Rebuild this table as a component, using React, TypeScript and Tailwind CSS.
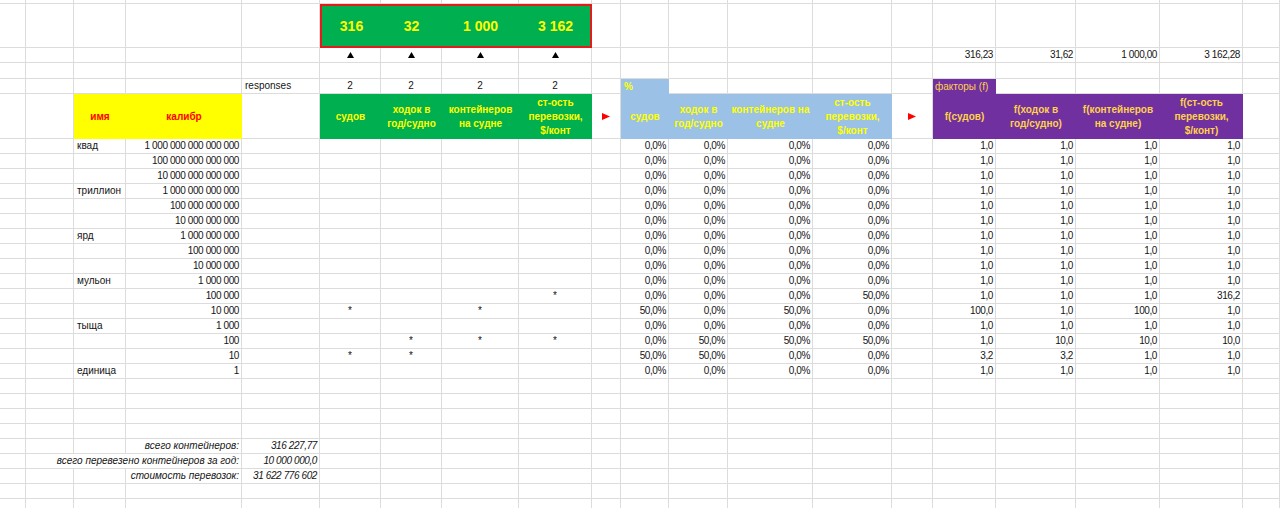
import React from "react";

type Cell = { t?: React.ReactNode; a?: "L" | "R" | "C"; k?: string; s?: 2 | 3 | 4; raw?: boolean };

const SPAN: Record<number, string> = { 2: "col-span-2", 3: "col-span-3", 4: "col-span-4" };

const base =
  "border-r border-b border-[#dcdcdc] flex items-center overflow-hidden whitespace-nowrap text-[10px] leading-none text-[#141414]";

const up = (
  <svg width="7" height="6" viewBox="0 0 7 6">
    <path d="M3.5 0L7 6H0z" fill="#000" />
  </svg>
);
const right = (
  <svg width="8" height="7" viewBox="0 0 8 7">
    <path d="M0 0L8 3.5L0 7z" fill="#ff0000" />
  </svg>
);

const E = (n: number): Cell[] => Array.from({ length: n }, () => ({}));

const names = ["квад", "", "", "триллион", "", "", "ярд", "", "", "мульон", "", "", "тыща", "", "", "единица"];
const cal = [
  "1 000 000 000 000 000",
  "100 000 000 000 000",
  "10 000 000 000 000",
  "1 000 000 000 000",
  "100 000 000 000",
  "10 000 000 000",
  "1 000 000 000",
  "100 000 000",
  "10 000 000",
  "1 000 000",
  "100 000",
  "10 000",
  "1 000",
  "100",
  "10",
  "1",
];
const stars: Record<number, number[]> = {
  10: [0, 0, 0, 1],
  11: [1, 0, 1, 0],
  13: [0, 1, 1, 1],
  14: [1, 1, 0, 0],
};
const fac: Record<number, string[]> = {
  10: ["1,0", "1,0", "1,0", "316,2"],
  11: ["100,0", "1,0", "100,0", "1,0"],
  13: ["1,0", "10,0", "10,0", "10,0"],
  14: ["3,2", "3,2", "1,0", "1,0"],
};

const num = "tracking-[-0.4px]";

const green = "bg-[#00b050] text-[#ffff00] font-bold";
const blue = "bg-[#9bc2e6] text-[#ffff00] font-bold";
const purple = "bg-[#7030a0] text-[#ffd24a] font-bold";

function hdr(k: string, t: React.ReactNode): Cell {
  return { raw: true, k: `${k} flex items-center justify-center text-center text-[10px] leading-[14px]`, t };
}

const rows: Cell[][] = [];
// row 1
rows.push(E(20));
// row 2 - top box
rows.push([
  ...E(5),
  {
    raw: true,
    s: 4,
    k: "bg-[#00b050] border-2 border-[#e31b1b] grid grid-cols-[59px_61px_77px_73px] items-center text-[14px] font-bold text-[#ffff00]",
    t: (
      <>
        <span className="text-center">316</span>
        <span className="text-center">32</span>
        <span className="text-center">1 000</span>
        <span className="text-center">3 162</span>
      </>
    ),
  },
  ...E(11),
]);
// row 3
rows.push([
  ...E(5),
  { t: up, a: "C" },
  { t: up, a: "C" },
  { t: up, a: "C" },
  { t: up, a: "C" },
  ...E(6),
  { t: "316,23", a: "R", k: num },
  { t: "31,62", a: "R", k: num },
  { t: "1 000,00", a: "R", k: num },
  { t: "3 162,28", a: "R", k: num },
  ...E(1),
]);
// row 4
rows.push(E(20));
// row 5
rows.push([
  ...E(4),
  { t: "responses", a: "L" },
  { t: "2", a: "C" },
  { t: "2", a: "C" },
  { t: "2", a: "C" },
  { t: "2", a: "C" },
  ...E(1),
  { raw: true, k: "bg-[#9bc2e6] text-[#ffff00] font-bold text-[10px] flex items-start pt-[3px] pl-[3px] leading-none", t: "%" },
  ...E(4),
  { raw: true, k: "bg-[#7030a0] text-[#ffd24a] text-[10px] flex items-center pl-[2px] leading-none whitespace-nowrap", t: "факторы (f)" },
  ...E(4),
]);
// row 6 headers
rows.push([
  ...E(2),
  hdr("bg-[#ffff00] text-[#ff0000] font-bold", "имя"),
  hdr("bg-[#ffff00] text-[#ff0000] font-bold", "калибр"),
  ...E(1),
  hdr(green, "судов"),
  hdr(green, <>ходок в<br />год/судно</>),
  hdr(green, <>контейнеров<br />на судне</>),
  hdr(green, <>ст-ость<br />перевозки,<br />$/конт</>),
  { t: right, a: "C" },
  hdr(blue, "судов"),
  hdr(blue, <>ходок в<br />год/судно</>),
  hdr(blue, <>контейнеров на<br />судне</>),
  hdr(blue, <>ст-ость<br />перевозки,<br />$/конт</>),
  { t: right, a: "C" },
  hdr(purple, "f(судов)"),
  hdr(purple, <>f(ходок в<br />год/судно)</>),
  hdr(purple, <>f(контейнеров<br />на судне)</>),
  hdr(purple, <>f(ст-ость<br />перевозки,<br />$/конт)</>),
  ...E(1),
]);
// data rows
for (let i = 0; i < 16; i++) {
  const st = stars[i] || [0, 0, 0, 0];
  const f = fac[i] || ["1,0", "1,0", "1,0", "1,0"];
  rows.push([
    ...E(2),
    { t: names[i], a: "L" },
    { t: cal[i], a: "R", k: num },
    ...E(1),
    ...st.map((v) => ({ t: v ? "*" : "", a: "C" as const })),
    ...E(1),
    ...st.map((v) => ({ t: v ? "50,0%" : "0,0%", a: "R" as const, k: num })),
    ...E(1),
    ...f.map((v) => ({ t: v, a: "R" as const, k: num })),
    ...E(1),
  ]);
}
// empty rows
for (let i = 0; i < 4; i++) rows.push(E(20));
// summary
rows.push([
  ...E(3),
  { t: "всего контейнеров:", a: "R", k: "italic" },
  { t: "316 227,77", a: "R", k: `italic ${num}` },
  ...E(15),
]);
rows.push([
  ...E(1),
  { t: "всего перевезено контейнеров за год:", a: "R", k: "italic", s: 3 },
  { t: "10 000 000,0", a: "R", k: `italic ${num}` },
  ...E(15),
]);
rows.push([
  ...E(3),
  { t: "стоимость перевозок:", a: "R", k: "italic" },
  { t: "31 622 776 602", a: "R", k: `italic ${num}` },
  ...E(15),
]);
rows.push(E(20));
rows.push(E(20));

const alignCls: Record<string, string> = {
  L: "justify-start pl-[3px]",
  R: "justify-end pr-[2px]",
  C: "justify-center",
};

export default function App() {
  return (
    <div
      className="w-[1280px] h-[508px] overflow-hidden bg-white"
      style={{ fontFamily: '"Liberation Sans", Arial, sans-serif' }}
    >
      <div className="grid grid-cols-[26px_48px_52px_116px_78px_61px_61px_77px_73px_29px_48px_59px_85px_79px_41px_63px_80px_84px_83px_1fr] grid-rows-[4px_44px_15px_16px_15px_45px_repeat(25,15px)]">
        {rows.flatMap((r, ri) =>
          r.map((c, ci) => {
            const span = c.s ? SPAN[c.s] : "";
            if (c.raw) {
              return (
                <div key={`${ri}-${ci}`} className={`${c.k} ${span}`}>
                  {c.t}
                </div>
              );
            }
            return (
              <div key={`${ri}-${ci}`} className={`${base} ${c.a ? alignCls[c.a] : ""} ${c.k || ""} ${span}`}>
                {c.t}
              </div>
            );
          })
        )}
      </div>
    </div>
  );
}
